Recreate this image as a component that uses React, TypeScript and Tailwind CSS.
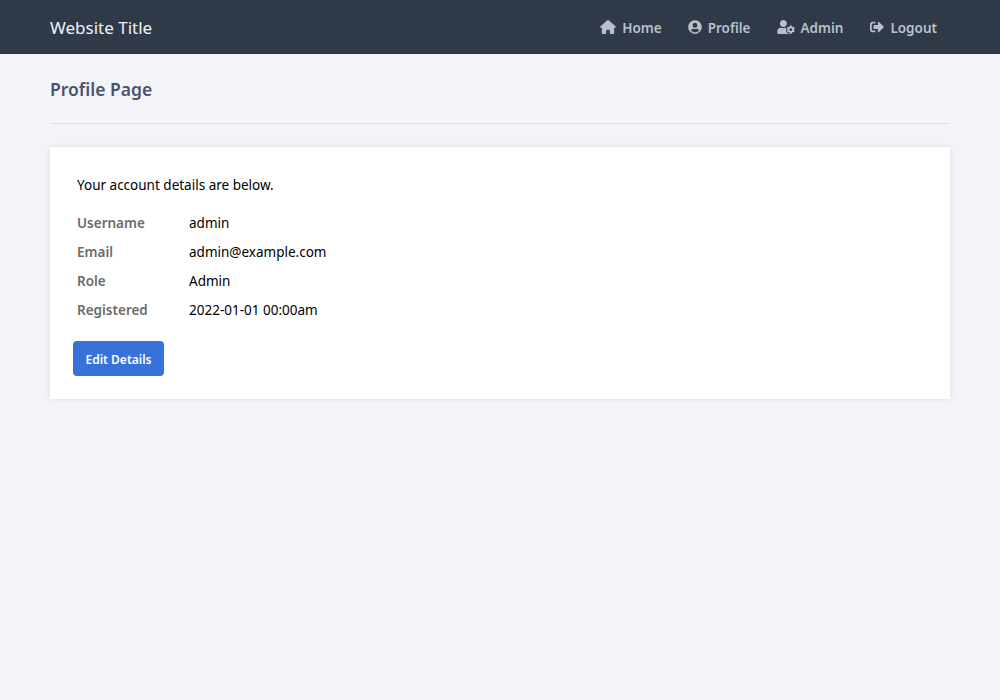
import { FaUserCircle, FaUserCog, FaSignOutAlt } from "react-icons/fa";
import { FaHouse } from "react-icons/fa6";

const navLinks = [
  { label: "Home", icon: FaHouse, size: "w-4 h-[14px]", extra: "" },
  { label: "Profile", icon: FaUserCircle, size: "w-[14px] h-[14px]", extra: "" },
  { label: "Admin", icon: FaUserCog, size: "w-[18px] h-[14px]", extra: "" },
  { label: "Logout", icon: FaSignOutAlt, size: "w-[14px] h-[14px]", extra: "ml-px" },
];

const details = [
  { label: "Username", value: "admin" },
  { label: "Email", value: "admin@example.com" },
  { label: "Role", value: "Admin" },
  { label: "Registered", value: "2022-01-01 00:00am" },
];

export default function App() {
  return (
    <div className="min-h-[700px] bg-[#f3f4f8] font-['Noto_Sans',sans-serif] text-[13.5px] text-black">
      <header className="h-[54px] bg-[#2f3947] px-[50px] flex items-center justify-between">
        <h1 className="pt-[2px] text-[17px] text-[#f1f3f6] font-normal">Website Title</h1>
        <nav className="flex items-center gap-[26px] pr-[13px]">
          {navLinks.map((link) => (
            <a key={link.label} href="#" className={`flex items-center gap-[6px] ${link.extra} text-[13.5px] font-semibold text-[#b9c0cb]`}>
              <link.icon className={link.size} />
              <span className="pt-[2px]">{link.label}</span>
            </a>
          ))}
        </nav>
      </header>

      <main className="px-[50px]">
        <h2 className="h-[70px] border-b border-[#dfe1e8] pt-[23px] text-[17.5px] font-semibold text-[#4a536e] leading-[24px] box-border">
          Profile Page
        </h2>
        <section className="mt-[23px] h-[252px] bg-white shadow-[0_0_5px_rgba(0,0,0,0.1)] pt-[27px] pl-[27px]">
          <p className="leading-[22px]">Your account details are below.</p>
          <div className="mt-[13px] flex flex-col">
            {details.map((row) => (
              <div key={row.label} className="flex h-[29px] items-center">
                <span className="w-[112px] font-semibold text-[#6b6b6b]">{row.label}</span>
                <span>{row.value}</span>
              </div>
            ))}
          </div>
          <button className="mt-[16px] -ml-1 h-[35px] w-[91px] rounded bg-[#3672d9] pt-[2px] text-[12px] font-semibold text-white">
            Edit Details
          </button>
        </section>
      </main>
    </div>
  );
}
